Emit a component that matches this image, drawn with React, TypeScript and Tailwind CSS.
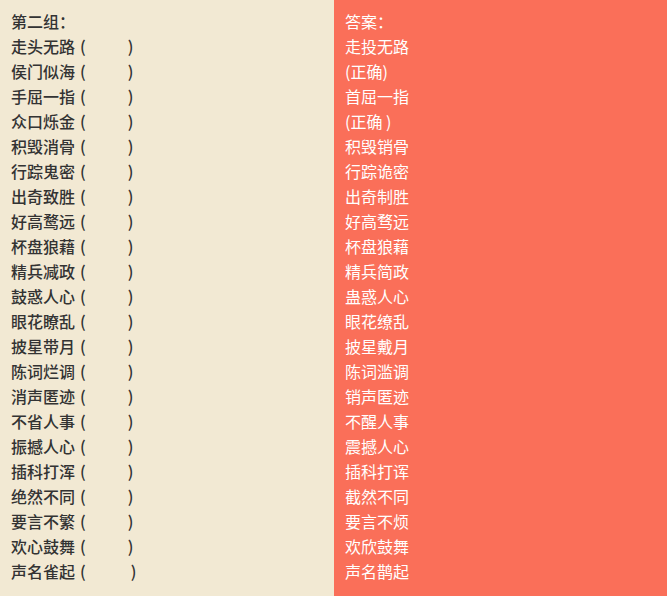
const QUESTIONS = [
  '走头无路',
  '侯门似海',
  '手屈一指',
  '众口烁金',
  '积毁消骨',
  '行踪鬼密',
  '出奇致胜',
  '好高鹜远',
  '杯盘狼藉',
  '精兵减政',
  '鼓惑人心',
  '眼花瞭乱',
  '披星带月',
  '陈词烂调',
  '消声匿迹',
  '不省人事',
  '振撼人心',
  '插科打浑',
  '绝然不同',
  '要言不繁',
  '欢心鼓舞',
  '声名雀起',
];

const ANSWERS = [
  '走投无路',
  '(正确)',
  '首屈一指',
  '(正确 )',
  '积毁销骨',
  '行踪诡密',
  '出奇制胜',
  '好高骛远',
  '杯盘狼藉',
  '精兵简政',
  '蛊惑人心',
  '眼花缭乱',
  '披星戴月',
  '陈词滥调',
  '销声匿迹',
  '不醒人事',
  '震撼人心',
  '插科打诨',
  '截然不同',
  '要言不烦',
  '欢欣鼓舞',
  '声名鹊起',
];

const fontCls = "font-['Noto_Sans_CJK_SC','Noto_Sans',sans-serif] text-[16px] leading-[25px]";

export default function App() {
  return (
    <div className={`flex h-[596px] w-[667px] ${fontCls}`}>
      <div className="w-[334px] bg-[#f2e9d3] pl-[11px] pt-[9px] font-medium text-[#333333]">
        <div>第二组：</div>
        {QUESTIONS.map((q, i) => (
          <div key={q} className="flex items-center">
            <span>{q}</span>
            <span className="ml-[5px]">(</span>
            <span className={i === QUESTIONS.length - 1 ? 'w-[45px]' : 'w-[42px]'} />
            <span>)</span>
          </div>
        ))}
      </div>
      <div className="flex-1 bg-[#fa6f59] pl-[11px] pt-[9px] text-white">
        <div>答案：</div>
        {ANSWERS.map((a, i) => (
          <div key={i}>{a}</div>
        ))}
      </div>
    </div>
  );
}
